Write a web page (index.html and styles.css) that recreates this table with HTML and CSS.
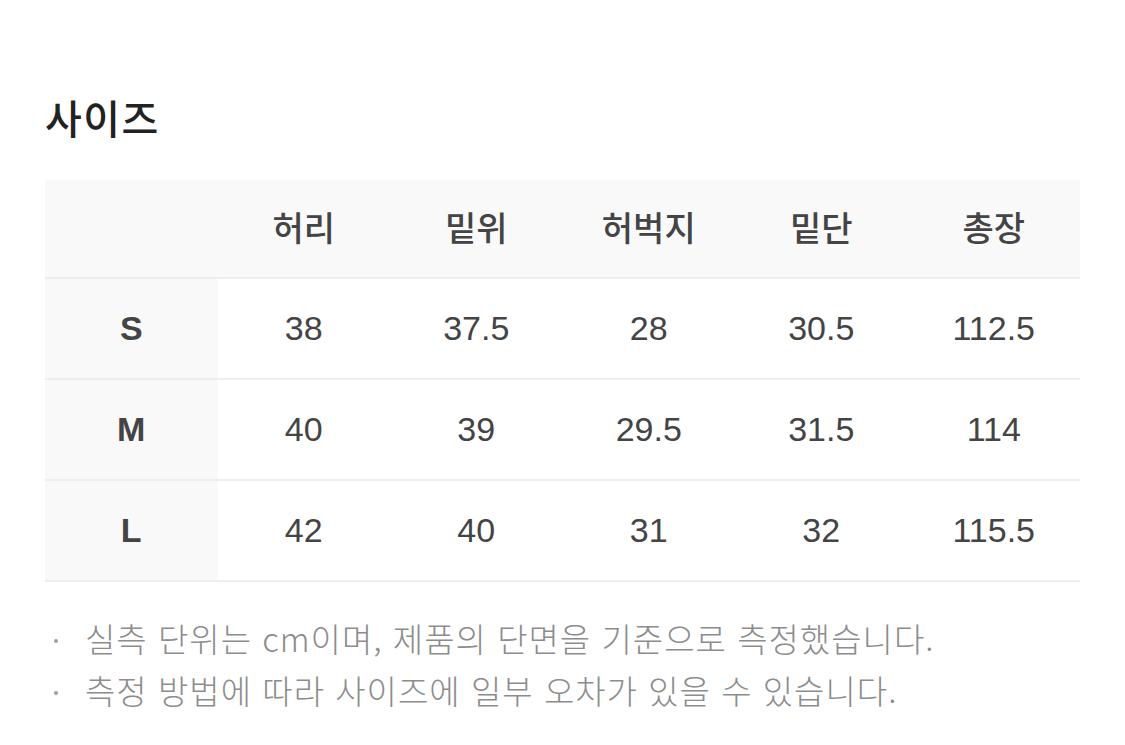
FILE: index.html
```html
<!DOCTYPE html>
<html lang="ko">
<head>
<meta charset="utf-8">
<link rel="stylesheet" href="styles.css">
</head>
<body>
<section class="size-section">
  <h2 class="title">사이즈</h2>
  <div class="size-table">
    <div class="row head">
      <div class="cell label"></div>
      <div class="cell">허리</div>
      <div class="cell">밑위</div>
      <div class="cell">허벅지</div>
      <div class="cell">밑단</div>
      <div class="cell">총장</div>
    </div>
    <div class="row">
      <div class="cell label">S</div>
      <div class="cell">38</div>
      <div class="cell">37.5</div>
      <div class="cell">28</div>
      <div class="cell">30.5</div>
      <div class="cell">112.5</div>
    </div>
    <div class="row">
      <div class="cell label">M</div>
      <div class="cell">40</div>
      <div class="cell">39</div>
      <div class="cell">29.5</div>
      <div class="cell">31.5</div>
      <div class="cell">114</div>
    </div>
    <div class="row">
      <div class="cell label">L</div>
      <div class="cell">42</div>
      <div class="cell">40</div>
      <div class="cell">31</div>
      <div class="cell">32</div>
      <div class="cell">115.5</div>
    </div>
  </div>
  <ul class="notes">
    <li>실측 단위는 cm이며, 제품의 단면을 기준으로 측정했습니다.</li>
    <li>측정 방법에 따라 사이즈에 일부 오차가 있을 수 있습니다.</li>
  </ul>
</section>
</body>
</html>
```

FILE: styles.css
```css
html, body {
  margin: 0;
  padding: 0;
  background: #ffffff;
}
body {
  font-family: "Noto Sans CJK KR", "Noto Sans", sans-serif;
  color: #444444;
}
.size-section {
  padding: 88px 45px 0 45px;
  width: 1035px;
}
.title {
  margin: 0;
  font-size: 40px;
  line-height: 58px;
  font-weight: 500;
  letter-spacing: 1.5px;
  color: #222222;
}
.size-table {
  margin-top: 34px;
  display: flex;
  flex-direction: column;
}
.row {
  display: grid;
  grid-template-columns: repeat(6, 1fr);
  height: 99px;
  border-bottom: 2px solid #eeeeee;
}
.row.head {
  height: 97px;
  background: #f9f9f9;
}
.cell {
  display: flex;
  align-items: center;
  justify-content: center;
  font-size: 34px;
  font-family: "Liberation Sans", "Noto Sans CJK KR", sans-serif;
  color: #444444;
}
.row.head .cell {
  font-family: "Noto Sans CJK KR", sans-serif;
  font-weight: 500;
  padding-bottom: 4px;
}
.cell.label {
  background: #f9f9f9;
  font-weight: 700;
}
.notes {
  list-style: none;
  margin: 30px 0 0 0;
  padding: 0;
}
.notes li {
  position: relative;
  padding-left: 40px;
  font-size: 33px;
  line-height: 52px;
  letter-spacing: 1px;
  font-weight: 300;
  color: #8c8c8c;
  font-family: "Noto Sans CJK KR", sans-serif;
}
.notes li::before {
  content: "";
  position: absolute;
  left: 9px;
  top: 27px;
  width: 4px;
  height: 4px;
  border-radius: 50%;
  background: #a0a0a0;
}
```
